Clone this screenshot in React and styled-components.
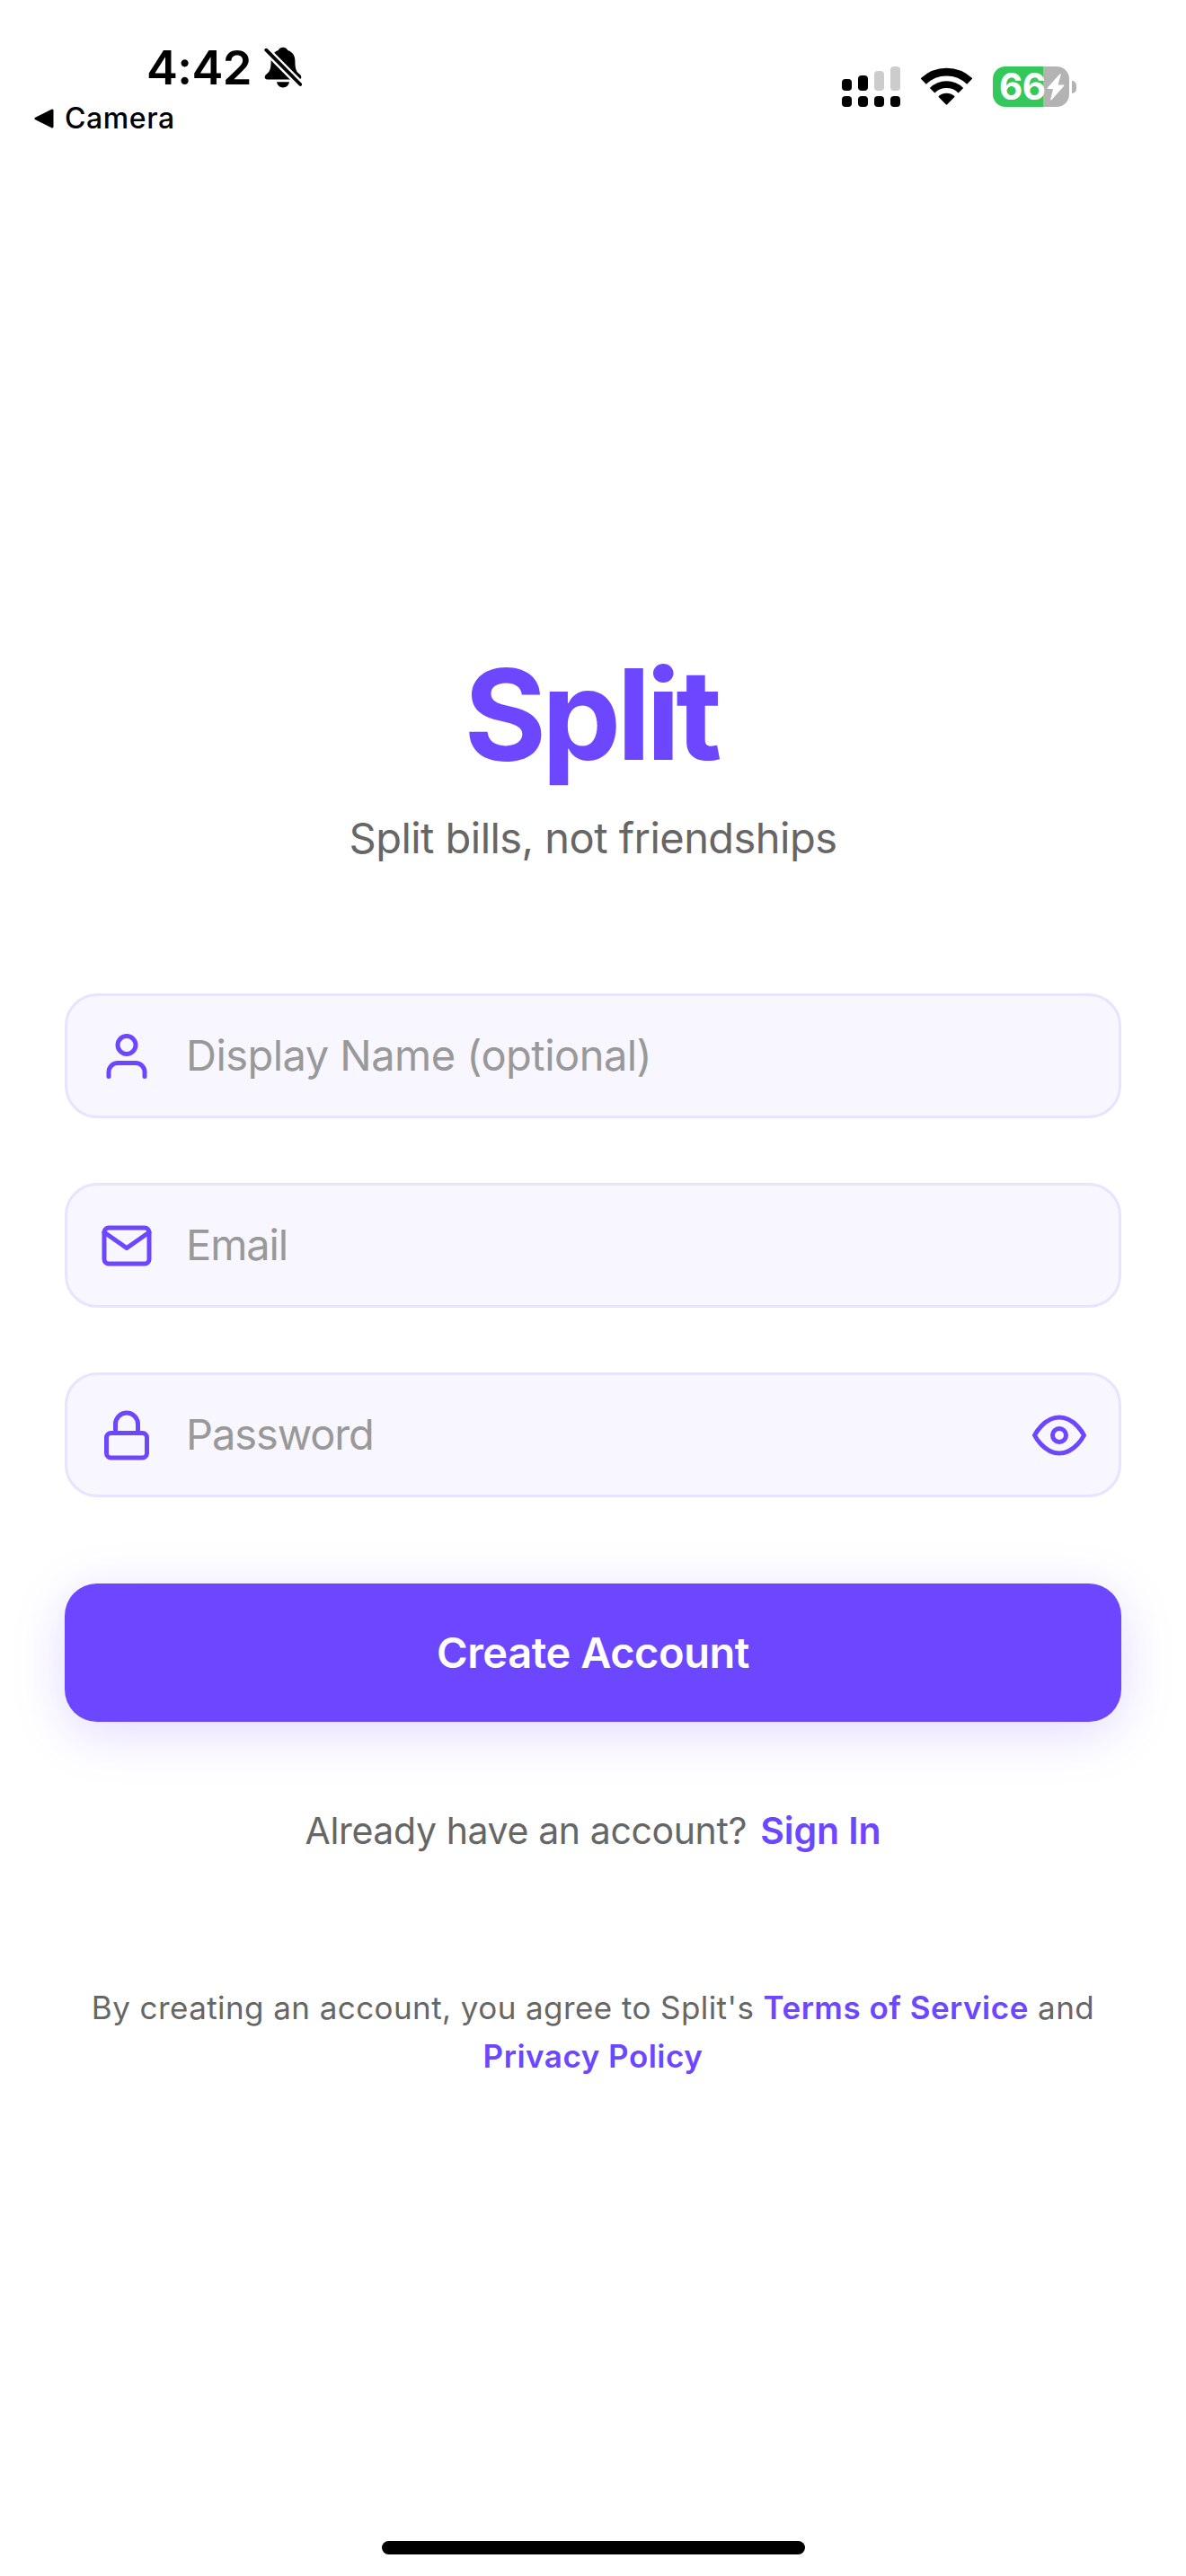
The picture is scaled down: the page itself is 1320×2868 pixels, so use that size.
import React, { useState } from "react";
import styled, { createGlobalStyle } from "styled-components";

const PURPLE = "#6c47ff";

const GlobalStyle = createGlobalStyle`
  * { box-sizing: border-box; }
  body {
    margin: 0;
    background: #ffffff;
    font-family: Inter, "Liberation Sans", sans-serif;
  }
`;

const Screen = styled.div`
  width: 1320px;
  height: 2868px;
  display: flex;
  flex-direction: column;
  background: #ffffff;
  overflow: hidden;
`;

const StatusBar = styled.header`
  height: 168px;
  flex: none;
  display: flex;
  justify-content: space-between;
  color: #000;
`;

const StatusLeft = styled.div`
  padding: 43px 0 0 38px;
  display: flex;
  flex-direction: column;
`;

const ClockRow = styled.div`
  height: 64px;
  padding-left: 125px;
  display: flex;
  align-items: center;
`;

const Clock = styled.span`
  width: 131px;
  font-size: 52.5px;
  font-weight: 600;
  line-height: 64px;
  letter-spacing: -0.6px;
  white-space: nowrap;
`;

const BackRow = styled.div`
  height: 50px;
  display: flex;
  align-items: center;
  gap: 12px;
  font-size: 32px;
  font-weight: 500;
  line-height: 50px;
  letter-spacing: 0.6px;
`;

const StatusRight = styled.div`
  display: flex;
  align-items: flex-start;
  padding: 74px 122px 0 0;
`;

const Signal = styled.div`
  width: 65px;
  margin-right: 23px;
  display: flex;
  gap: 7px;
`;

const SignalColumn = styled.div`
  width: 11px;
  height: 45px;
  display: flex;
  flex-direction: column;
  justify-content: flex-end;
  gap: 6px;
`;

const SignalBar = styled.i`
  height: ${(p) => p.$h}px;
  border-radius: 4px;
  background: ${(p) => (p.$off ? "#cccccc" : "#000")};
`;

const WifiIcon = styled.svg`
  width: 57px;
  height: 42px;
  margin: 1px 23px 0 0;
`;

const Battery = styled.div`
  display: flex;
  align-items: center;
  gap: 3px;
`;

const BatteryBody = styled.div`
  width: 85px;
  height: 45px;
  padding-left: 7px;
  border-radius: 14px;
  display: flex;
  align-items: center;
  background: linear-gradient(to right, #34c759 56px, #b3b3b3 56px);
  color: #fff;
`;

const BatteryLevel = styled.span`
  width: 53px;
  font-size: 40.5px;
  font-weight: 700;
  line-height: 45px;
  letter-spacing: -0.5px;
  white-space: nowrap;
`;

const BatteryTip = styled.i`
  width: 5px;
  height: 14px;
  border-radius: 0 7px 7px 0;
  background: #b3b3b3;
`;

const Main = styled.main`
  flex: 1;
  padding: 542px 72px 0;
  display: flex;
  flex-direction: column;
`;

const Title = styled.h1`
  margin: 0;
  padding-right: 5px;
  color: ${PURPLE};
  font-size: 140px;
  font-weight: 700;
  line-height: 170px;
  letter-spacing: -5px;
  text-align: center;
`;

const Tagline = styled.p`
  margin: 23px 0 0;
  color: #666;
  font-size: 47px;
  line-height: 60px;
  letter-spacing: -0.54px;
  text-align: center;
`;

const Form = styled.form`
  margin-top: 143px;
  display: flex;
  flex-direction: column;
  gap: 72px;
`;

const Field = styled.label`
  height: 139px;
  padding: 0 36px;
  display: flex;
  align-items: center;
  border: 3px solid #e8e4ff;
  border-radius: 36px;
  background: #f8f6ff;
`;

const Input = styled.input`
  flex: 1;
  min-width: 0;
  margin-left: 36px;
  padding: 0 0 2px;
  border: 0;
  outline: 0;
  background: transparent;
  color: #1a1a1a;
  font-family: inherit;
  font-size: 47px;
  line-height: 60px;
  letter-spacing: ${(p) => p.$tracking}px;
  &::placeholder { color: #999; opacity: 1; }
`;

const LineIcon = styled.svg`
  width: 60px;
  height: 60px;
  flex: none;
  display: block;
  fill: none;
  stroke: ${PURPLE};
  stroke-width: 2;
  stroke-linecap: round;
  stroke-linejoin: round;
`;

const IconButton = styled.button`
  padding: 0;
  border: 0;
  background: none;
`;

const SubmitButton = styled.button`
  height: 154px;
  margin-top: 24px;
  padding: 0;
  border: 0;
  border-radius: 36px;
  background: ${PURPLE};
  box-shadow: 0 12px 60px rgba(108, 71, 255, 0.2);
  color: #fff;
  font-family: inherit;
  font-size: 47px;
  font-weight: 600;
  line-height: 154px;
  letter-spacing: -0.45px;
`;

const SignInPrompt = styled.p`
  margin: 94px 0 0;
  color: #666;
  font-size: 41px;
  line-height: 54px;
  letter-spacing: -0.38px;
  text-align: center;
`;

const Legal = styled.p`
  margin: 143px -10px 0;
  color: #666;
  font-size: 35px;
  line-height: 54px;
  letter-spacing: 0.42px;
  text-align: center;
`;

const Link = styled.a`
  margin-left: ${(p) => p.$lead || 0}px;
  color: ${PURPLE};
  font-weight: 600;
  letter-spacing: ${(p) => p.$tracking}px;
`;

const HomeIndicator = styled.div`
  width: 471px;
  height: 15px;
  margin: 0 0 24px 425px;
  border-radius: 8px;
  background: #000;
`;

function BellOff() {
  return (
    <svg width="42" height="46" viewBox="0 0 42 46">
      <path d="M21 .7c-2.6 0-4.6 1.4-5.2 3.4C10 6 7.6 10.5 7.6 16c0 9-1.5 11.5-4.6 14.3C1.4 31.7.7 32.6.7 34c0 1.6 1.2 2.4 2.8 2.4h35c1.6 0 2.8-.8 2.8-2.4 0-1.4-.7-2.3-2.3-3.7C35.9 27.5 34.4 25 34.4 16c0-5.5-2.4-10-8.2-11.9C25.6 2.1 23.6.7 21 .7z" />
      <path d="M14 39.3h14c-.6 3.6-3.4 6.2-7 6.2s-6.4-2.6-7-6.2z" />
      <path d="M0 1.4L44 45.8" stroke="#fff" strokeWidth="8.6" />
      <path d="M2.3 3.7L40.3 42" stroke="#000" strokeWidth="3.8" strokeLinecap="round" />
    </svg>
  );
}

function Wifi() {
  return (
    <WifiIcon viewBox="0 0 57 42" fill="none" stroke="#000">
      <path d="M2.7 15.6a36.8 36.8 0 0 1 51.6 0" strokeWidth="8.8" />
      <path d="M12.6 25.7a22.6 22.6 0 0 1 31.8 0" strokeWidth="7.8" />
      <path d="M20.6 32.6a12 12 0 0 1 15.8 0L28.5 40.6z" fill="#000" strokeWidth="2" strokeLinejoin="round" />
    </WifiIcon>
  );
}

function Bolt() {
  return (
    <svg width="20" height="30" viewBox="0 0 20 30" fill="#fff" stroke="#fff" strokeWidth="1.4" strokeLinejoin="round">
      <path d="M15 1L1.2 16.2H8L4.9 28.9L18.6 13.2H11.6z" />
    </svg>
  );
}

const SIGNAL = [
  { h: 13 },
  { h: 17 },
  { h: 22, off: true },
  { h: 27, off: true },
];

export default function App() {
  const [visible, setVisible] = useState(false);
  return (
    <Screen>
      <GlobalStyle />
      <StatusBar>
        <StatusLeft>
          <ClockRow>
            <Clock>4:42</Clock>
            <BellOff />
          </ClockRow>
          <BackRow>
            <svg width="22" height="22" viewBox="0 0 22 22" stroke="#000" strokeWidth="3" strokeLinejoin="round">
              <path d="M2 11L20 2V20z" />
            </svg>
            Camera
          </BackRow>
        </StatusLeft>
        <StatusRight>
          <Signal>
            {SIGNAL.map((bar) => (
              <SignalColumn key={bar.h}>
                <SignalBar $h={bar.h} $off={bar.off} />
                <SignalBar $h={12} />
              </SignalColumn>
            ))}
          </Signal>
          <Wifi />
          <Battery>
            <BatteryBody>
              <BatteryLevel>66</BatteryLevel>
              <Bolt />
            </BatteryBody>
            <BatteryTip />
          </Battery>
        </StatusRight>
      </StatusBar>

      <Main>
        <Title>Split</Title>
        <Tagline>Split bills, not friendships</Tagline>
        <Form onSubmit={(e) => e.preventDefault()}>
          <Field>
            <LineIcon viewBox="0 0 24 24">
              <path d="M20 21v-2a4 4 0 0 0-4-4H8a4 4 0 0 0-4 4v2" />
              <circle cx="12" cy="7" r="4" />
            </LineIcon>
            <Input $tracking={-0.53} placeholder="Display Name (optional)" />
          </Field>
          <Field>
            <LineIcon viewBox="0 0 24 24">
              <path d="M4 4h16c1.1 0 2 .9 2 2v12c0 1.1-.9 2-2 2H4c-1.1 0-2-.9-2-2V6c0-1.1.9-2 2-2z" />
              <path d="M22 6l-10 7L2 6" />
            </LineIcon>
            <Input $tracking={-1.1} type="email" placeholder="Email" />
          </Field>
          <Field>
            <LineIcon viewBox="0 0 24 24">
              <rect x="3" y="11" width="18" height="11" rx="2" />
              <path d="M7 11V7a5 5 0 0 1 10 0v4" />
            </LineIcon>
            <Input $tracking={-1.1} type={visible ? "text" : "password"} placeholder="Password" />
            <IconButton type="button" onClick={() => setVisible(!visible)}>
              <LineIcon viewBox="0 0 24 24">
                <path d="M1 12s4-8 11-8 11 8 11 8-4 8-11 8-11-8-11-8z" />
                <circle cx="12" cy="12" r="3" />
              </LineIcon>
            </IconButton>
          </Field>
          <SubmitButton>Create Account</SubmitButton>
        </Form>
        <SignInPrompt>
          Already have an account? <Link $lead={4} $tracking={-0.1}>Sign In</Link>
        </SignInPrompt>
        <Legal>
          By creating an account, you agree to Split's <Link $tracking={0.5}>Terms of Service</Link> and{" "}
          <Link $tracking={0.5}>Privacy Policy</Link>
        </Legal>
      </Main>
      <HomeIndicator />
    </Screen>
  );
}
